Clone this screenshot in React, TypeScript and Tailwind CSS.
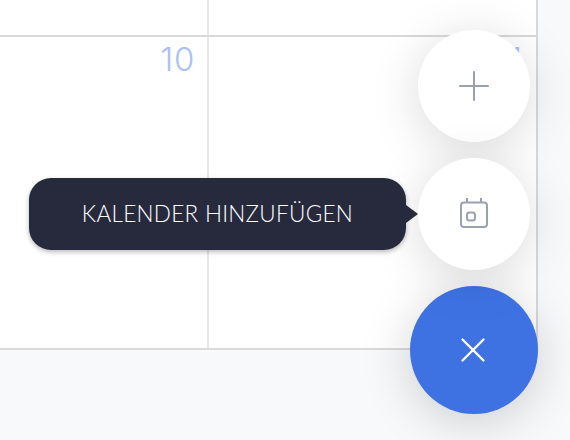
import { Plus, X } from "lucide-react";

function CalendarIcon() {
  return (
    <svg width="28" height="30" viewBox="0 0 28 30" fill="none" stroke="#9aa0b2" strokeWidth="2" strokeLinejoin="round">
      <rect x="1" y="4.5" width="26" height="24.5" rx="3" />
      <rect x="7" y="14.5" width="8" height="8" rx="2.5" />
      <path d="M7 0v4M21 0v4" />
    </svg>
  );
}

export default function App() {
  return (
    <div className="relative h-[440px] w-[570px] overflow-hidden bg-[#f8f9fb] font-['Lato',sans-serif]">
      <div className="h-[350px] w-[538px] border-r-2 border-b-2 border-[#d9d9d9] bg-white">
        <div className="flex h-[37px] border-b-2 border-[#d9d9d9]">
          <div className="w-[209px] border-r-2 border-[#e8e8e8]" />
          <div className="flex-1" />
        </div>
        <div className="flex h-[311px]">
          <div className="w-[209px] border-r-2 border-[#e8e8e8] pt-0.5 pr-3 text-right font-['Inter',sans-serif] text-[33px] leading-[40px] font-light tracking-[0.02em] text-[#a9c1f5]">
            10
          </div>
          <div className="flex-1 pt-0.5 pr-3.5 text-right font-['Inter',sans-serif] text-[33px] leading-[40px] font-light text-[#a9c1f5]">
            11
          </div>
        </div>
      </div>

      <div className="absolute right-8 bottom-[26px] flex w-32 flex-col items-center gap-4">
        <button type="button" className="flex h-28 w-28 items-center justify-center rounded-full bg-white shadow-[0_8px_50px_rgba(0,0,0,0.15)]">
          <Plus size={48} strokeWidth={1} color="#9aa0b2" />
        </button>
        <div className="relative">
          <button type="button" className="flex h-28 w-28 items-center justify-center rounded-full bg-white shadow-[0_8px_50px_rgba(0,0,0,0.15)]">
            <span className="-mt-0.5 flex"><CalendarIcon /></span>
          </button>
          <div className="absolute top-5 right-full mr-3 flex h-[72px] w-[377px] items-center justify-center rounded-[22px] bg-[#272a3d] text-[22.5px] font-light tracking-[0.3px] text-white antialiased shadow-[0_2px_5px_rgba(0,0,0,0.28)]">
            KALENDER HINZUFÜGEN
            <span className="absolute top-[27px] -right-3 h-0 w-0 border-y-[9px] border-l-[12px] border-y-transparent border-l-[#272a3d]" />
          </div>
        </div>
        <button type="button" className="flex h-32 w-32 items-center justify-center rounded-full bg-[#3e72e3] shadow-[0_8px_50px_rgba(0,0,0,0.18)]">
          <X size={42} strokeWidth={1.35} color="#ffffff" className="-ml-0.5" />
        </button>
      </div>
    </div>
  );
}
